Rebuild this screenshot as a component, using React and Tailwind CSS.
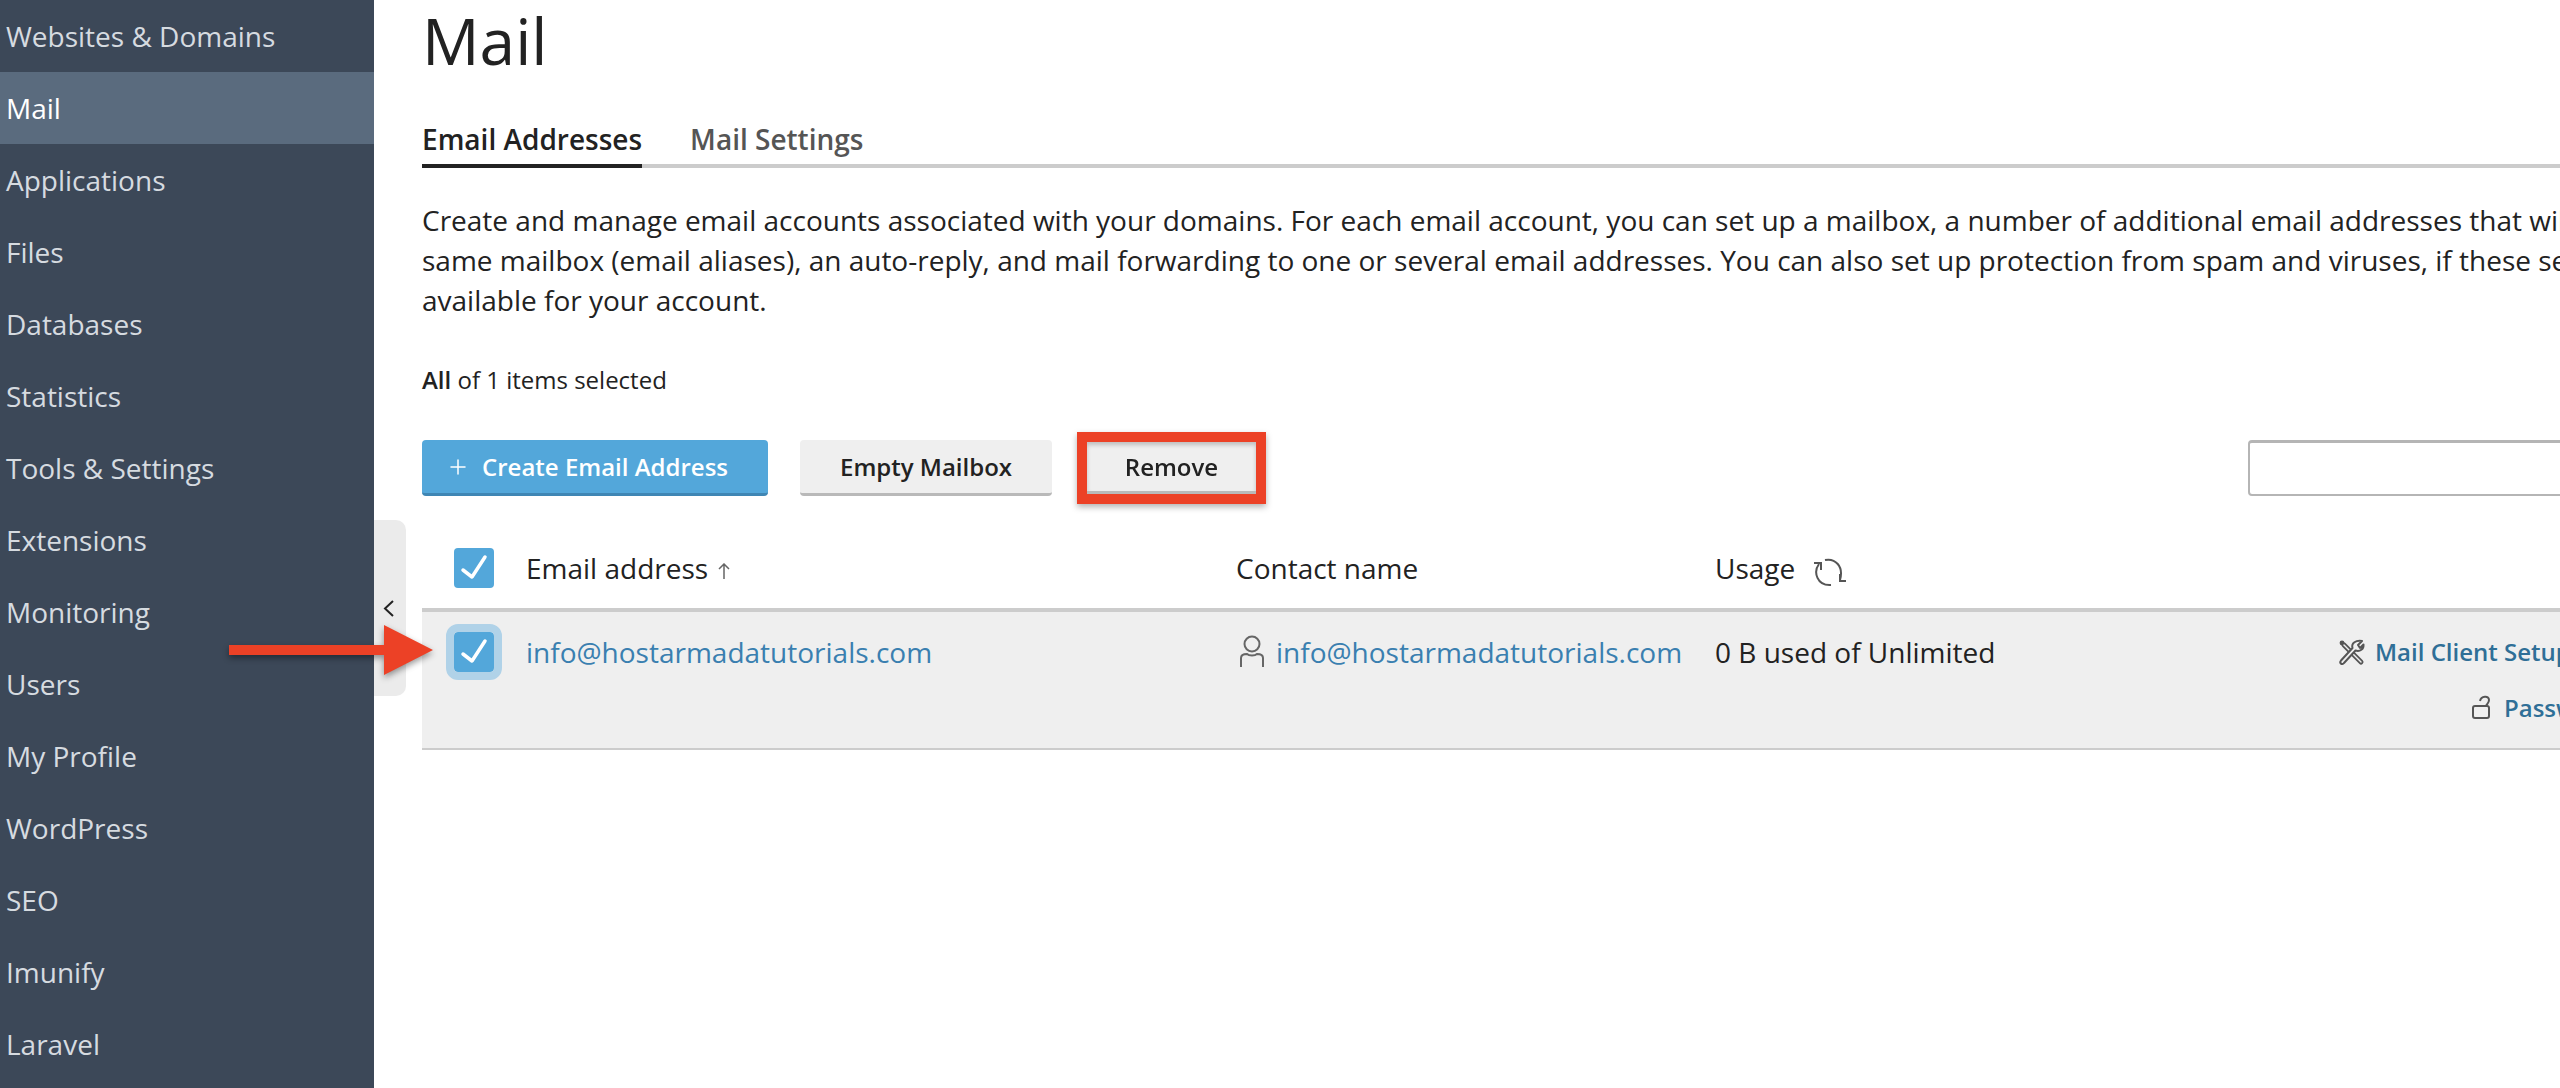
import { Plus } from 'lucide-react'

const navItems = [
  'Websites & Domains', 'Mail', 'Applications', 'Files', 'Databases', 'Statistics', 'Tools & Settings',
  'Extensions', 'Monitoring', 'Users', 'My Profile', 'WordPress', 'SEO', 'Imunify', 'Laravel',
]

function CheckBox() {
  return (
    <span className="flex h-10 w-10 items-center justify-center rounded-[4px] bg-[#53a7da]">
      <svg width="40" height="40" viewBox="0 0 40 40" fill="none" stroke="#fff" strokeWidth="3.5" strokeLinecap="round" strokeLinejoin="round">
        <path d="M9 22 L18 29 L31 9" />
      </svg>
    </span>
  )
}

function UserIcon() {
  return (
    <svg width="24" height="33" viewBox="8 5 24 33" fill="none" stroke="#666" strokeWidth="2">
      <circle cx="20" cy="14" r="7.5" />
      <path d="M9 37 V28 C9 25 12 24 15 24 C17 26 23 26 25 24 C28 24 31 25 31 28 V37" />
    </svg>
  )
}

function RefreshIcon() {
  return (
    <svg width="34" height="30" viewBox="8 8 34 30" fill="none" stroke="#555" strokeWidth="2">
      <path d="M14 14 C8 22 12 36 26 35" />
      <path d="M9 13 H16 V20" />
      <path d="M20 10 C30 8 39 16 35 30" />
      <path d="M41 31 H35 V24" />
    </svg>
  )
}

function ToolsIcon() {
  return (
    <svg width="27" height="27" viewBox="8 8 27 27" fill="none" strokeLinejoin="round" strokeLinecap="round">
      <circle cx="12" cy="12" r="2.4" fill="#555" />
      <path d="M14 14 L31 31" stroke="#555" strokeWidth="5" />
      <path d="M14 14 L31 31" stroke="#efefef" strokeWidth="1.4" />
      <path
        d="M32 10 L28 14 L30 17 L33.5 13.5 C34 18 30 21 25.5 19.5 L14 32 C12 34.5 9 32 11 29.5 L22.5 17 C21 12 26 9 32 10 Z"
        fill="#efefef"
        stroke="#555"
        strokeWidth="2"
      />
    </svg>
  )
}

function LockIcon() {
  return (
    <svg width="20" height="26" viewBox="0 0 20 26" fill="none" stroke="#555" strokeWidth="2">
      <rect x="2" y="11" width="16" height="12" rx="2" />
      <path d="M9 6 C10 1 18 0 18 5 C18 8 16 9 15 11" />
    </svg>
  )
}

export default function App() {
  return (
    <div className="relative flex h-[1088px] w-[2560px] overflow-hidden bg-white font-['Open_Sans',sans-serif] text-[#222]">
      <nav className="w-[374px] shrink-0 bg-[#3c4858]">
        {navItems.map((item) => (
          <div
            key={item}
            className={`flex h-[72px] items-center pl-[6px] text-[28px] ${item === 'Mail' ? 'bg-[#5a6b7e] text-white' : 'text-[#d6dbe0]'}`}
          >
            {item}
          </div>
        ))}
      </nav>

      <div className="absolute left-[374px] top-[520px] flex h-[176px] w-8 items-center rounded-r-[10px] bg-[#ebebeb] pl-[9px]">
        <svg width="11" height="17" viewBox="0 0 11 17" fill="none" stroke="#222" strokeWidth="2">
          <path d="M10 1 L2 8.5 L10 16" />
        </svg>
      </div>

      <main className="min-w-0 flex-1 pl-12">
        <h1 className="h-[74px] pt-[1px] text-[64px] leading-[80px] font-normal">Mail</h1>

        <div className="mt-[45px] flex h-[49px] border-b-4 border-[#ccc]">
          <div className="-mb-1 h-[49px] border-b-4 border-[#222] text-[28px] leading-[40px] font-semibold">Email Addresses</div>
          <div className="ml-12 text-[28px] leading-[40px] font-semibold text-[#555]">Mail Settings</div>
        </div>

        <p className="mt-8 text-[28px] leading-[40px] whitespace-nowrap">
          Create and manage email accounts associated with your domains. For each email account, you can set up a mailbox, a number of additional email addresses that will deliver mail to the
          <br />
          same mailbox (email aliases), an auto-reply, and mail forwarding to one or several email addresses. You can also set up protection from spam and viruses, if these services are
          <br />
          available for your account.
        </p>

        <div className="mt-11 text-2xl leading-8">
          <span className="font-semibold">All</span> of 1 items selected
        </div>

        <div className="mt-11 flex h-14 items-center">
          <button className="flex h-14 w-[346px] shrink-0 items-center rounded-[4px] border-b-[3px] border-[#3f86b4] bg-[#53a7da] pl-6 text-2xl font-semibold text-white">
            <Plus size={24} strokeWidth={1.5} className="mr-3" />
            Create Email Address
          </button>
          <button className="ml-8 h-14 w-[252px] shrink-0 rounded-[4px] border-b-[3px] border-[#b9b9b9] bg-[#efefef] text-2xl font-semibold">
            Empty Mailbox
          </button>
          <button className="ml-[35px] h-[52px] w-[169px] shrink-0 border-b-[3px] border-[#b9b9b9] bg-[#efefef] text-2xl font-semibold shadow-[inset_0_3px_4px_rgba(0,0,0,0.2)] outline-[10px] outline-[#ec4126] drop-shadow-[0_3px_3px_rgba(0,0,0,0.3)]">
            Remove
          </button>
          <div className="ml-[992px] h-14 w-[400px] shrink-0 rounded-[4px] border-2 border-t-[3px] border-[#b5b5b5] bg-white" />
        </div>

        <div className="mt-[52px] grid h-[60px] grid-cols-[104px_710px_479px_1fr] text-[28px]">
          <div className="pl-8"><CheckBox /></div>
          <div className="flex h-10 items-center">
            Email address
            <svg className="mt-[6px] ml-[10px]" width="12" height="16" viewBox="0 0 12 16" fill="none" stroke="#666" strokeWidth="1.5">
              <path d="M6 16 V1 M1 6 L6 1 L11 6" />
            </svg>
          </div>
          <div className="flex h-10 items-center">Contact name</div>
          <div className="flex h-10 items-center">
            Usage
            <span className="mt-[10px] ml-[18px]"><RefreshIcon /></span>
          </div>
        </div>

        <div className="grid h-[142px] grid-cols-[104px_710px_479px_623px_1fr] border-t-4 border-b-2 border-[#ccc] bg-[#efefef] text-[28px]">
          <div className="pt-5 pl-8">
            <span className="block w-10 rounded-[4px] outline-8 outline-[#b0d2e8]"><CheckBox /></span>
          </div>
          <a className="pt-5 leading-10 text-[#3a7fb0]">info@hostarmadatutorials.com</a>
          <div className="flex items-start gap-3 pt-[20px] pl-1">
            <span className="mt-[3px]"><UserIcon /></span>
            <a className="leading-10 text-[#3a7fb0]">info@hostarmadatutorials.com</a>
          </div>
          <div className="pt-5 leading-10">0 B used of Unlimited</div>
          <div className="whitespace-nowrap pt-5 text-2xl font-semibold text-[#2f6f97]">
            <div className="flex h-10 items-center gap-[10px]"><ToolsIcon />Mail Client Setup</div>
            <div className="mt-4 ml-[133px] flex h-10 items-center gap-[13px]"><LockIcon />Password</div>
          </div>
        </div>
      </main>

      <svg className="absolute left-[229px] top-[625px] drop-shadow-[0_3px_3px_rgba(0,0,0,0.4)]" width="205" height="50" viewBox="0 0 205 50">
        <path d="M0 20 H155 V0 L204 25 L155 50 V30 H0 Z" fill="#ec4126" />
      </svg>
    </div>
  )
}
